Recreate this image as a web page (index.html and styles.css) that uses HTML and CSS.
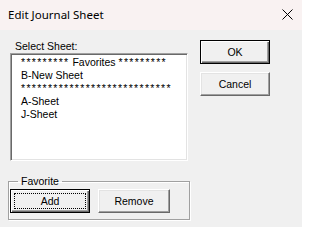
FILE: index.html
```html
<!DOCTYPE html>
<html>
<head>
<meta charset="utf-8">
<link rel="stylesheet" href="styles.css">
</head>
<body>
<div class="window">
  <div class="titlebar">
    <span class="title">Edit Journal Sheet</span>
    <svg class="close" width="11" height="11" viewBox="0 0 11 11"><path d="M0.5 0.5 L10.5 10.5 M10.5 0.5 L0.5 10.5" stroke="#000" stroke-width="1" fill="none"/></svg>
  </div>
  <div class="body">
    <div class="left">
      <div class="label">Select Sheet:</div>
      <div class="listbox">
        <div class="item"><span class="stars">*********</span> Favorites <span class="stars">*********</span></div>
        <div class="item">B-New Sheet</div>
        <div class="item"><span class="stars">****************************</span></div>
        <div class="item">A-Sheet</div>
        <div class="item">J-Sheet</div>
      </div>
      <fieldset class="frame">
        <legend class="legend">Favorite</legend>
        <div class="frame-row">
          <button class="btn default focus add">Add</button>
          <button class="btn remove">Remove</button>
        </div>
      </fieldset>
    </div>
    <div class="right">
      <button class="btn default side">OK</button>
      <button class="btn side">Cancel</button>
    </div>
  </div>
</div>
</body>
</html>
```

FILE: styles.css
```css
html, body {
  margin: 0;
  padding: 0;
}
body {
  width: 302px;
  height: 227px;
  overflow: hidden;
  font-family: "Liberation Sans", Arial, sans-serif;
  font-size: 10.5px;
  color: #000;
}
.window {
  width: 302px;
  height: 227px;
  background: #f0f0f0;
}
.titlebar {
  height: 30px;
  background: #f9f2f2;
  display: flex;
  align-items: center;
  justify-content: space-between;
  padding: 0 9px 0 8px;
  box-sizing: border-box;
}
.title {
  font-family: "Noto Sans", "Open Sans", sans-serif;
  font-size: 11.5px;
  color: #000;
  margin-top: -1px;
}
.close {
  display: block;
  margin-top: -1px;
}
.body {
  display: flex;
  padding: 10px 0 0 8px;
}
.left {
  width: 182px;
}
.label {
  height: 13px;
  line-height: 13px;
  padding-left: 7px;
}
.listbox {
  margin-left: 2px;
  width: 178px;
  height: 108px;
  box-sizing: border-box;
  background: #fff;
  border: 1px solid;
  border-color: #a0a0a0 #fff #fff #a0a0a0;
  box-shadow: inset 1px 1px 0 #696969, inset -1px -1px 0 #e3e3e3;
  padding: 2px 0 0 10px;
}
.item {
  height: 13px;
  line-height: 13px;
  white-space: nowrap;
}
.stars {
  letter-spacing: 1.3px;
}
.frame {
  margin: 14px 0 0 0;
  padding: 1px 0 6px 1px;
  width: 182px;
  box-sizing: border-box;
  border: 1px solid #a0a0a0;
  box-shadow: inset 1px 1px 0 #fff, 1px 1px 0 #fff;
  min-width: 0;
}
.legend {
  padding: 0 3px;
  margin-left: 8px;
  line-height: 13px;
  height: 13px;
}
.frame-row {
  display: flex;
  gap: 8px;
}
.right {
  margin-left: 10px;
  display: flex;
  flex-direction: column;
  gap: 8px;
}
.btn {
  font-family: "Liberation Sans", Arial, sans-serif;
  font-size: 10.5px;
  color: #000;
  height: 24px;
  padding: 0;
  margin: 0;
  box-sizing: border-box;
  background: #f0f0f0;
  border: 1px solid;
  border-color: #fff #696969 #696969 #fff;
  box-shadow: inset -1px -1px 0 #a0a0a0, inset 1px 1px 0 #e3e3e3;
  position: relative;
}
.btn.default {
  border: 1px solid #000;
  box-shadow: inset 1px 1px 0 #fff, inset -1px -1px 0 #696969, inset -2px -2px 0 #a0a0a0;
}
.btn.focus::after {
  content: "";
  position: absolute;
  left: 3px;
  top: 3px;
  right: 3px;
  bottom: 3px;
  border: 1px dotted #000;
}
.side {
  width: 70px;
}
.add {
  width: 80px;
}
.remove {
  width: 72px;
}
```
